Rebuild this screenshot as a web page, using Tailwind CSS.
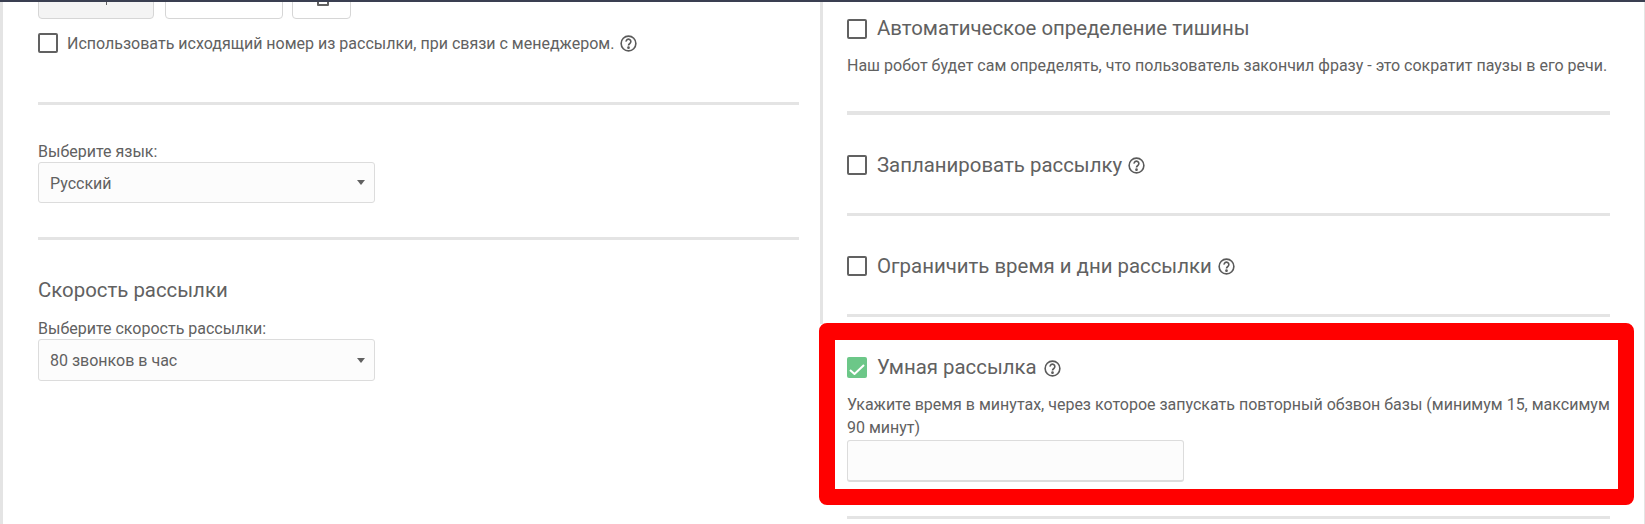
<!DOCTYPE html>
<html lang="ru">
<head>
<meta charset="UTF-8">
<title>Рассылка</title>
<script src="https://cdn.jsdelivr.net/npm/@tailwindcss/browser@4"></script>
</head>
<body class="bg-white text-[#616161] font-['Roboto',sans-serif] text-[16px] h-[524px] overflow-hidden">
<div class="relative h-[524px] overflow-hidden border-t-2 border-[#3a3f51] flex">

  <!-- левая колонка -->
  <div class="w-[820px] shrink-0 border-l-[3px] border-[#e4e4e4] pl-[35px] pr-[21px]">
    <div class="flex h-[17px] items-end">
      <div class="w-[116px] h-[30px] bg-[#f4f4f4] border border-[#d6d6d6] rounded-[4px] flex items-end pl-[67px] pb-[13px]">
        <span class="w-[1px] h-[4px] bg-[#616161]"></span>
      </div>
      <div class="ml-[11px] w-[118px] h-[30px] bg-white border border-[#d6d6d6] rounded-[4px]"></div>
      <div class="ml-[9px] w-[59px] h-[30px] bg-white border border-[#d6d6d6] rounded-[4px] flex items-end pl-[24px] pb-[12px]">
        <span class="w-[12px] h-[10px] border-2 border-[#616161] rounded-[1px]"></span>
      </div>
    </div>
    <label class="flex items-center mt-[14px] h-[20px]">
      <span class="w-[20px] h-[20px] border-2 border-[#616161] rounded-[2px] mr-[9px] shrink-0"></span>
      <span class="mt-[2px]">Использовать исходящий номер из рассылки, при связи с менеджером.</span>
      <svg class="ml-[6px] w-[17px] h-[17px]" viewBox="0 0 18 18" fill="none" stroke="#5a5a5a" stroke-width="1.7"><circle cx="9" cy="9" r="7.8"/><path d="M6.5 7a2.5 2.5 0 1 1 3.9 2c-.9.6-1.4 1-1.4 2"/><circle cx="9" cy="13.4" r=".6" fill="#5a5a5a"/></svg>
    </label>
    <hr class="mt-[49px] h-[3px] bg-[#e4e4e4] border-0">

    <p class="mt-[36px] h-[20px] leading-[22px]">Выберите язык:</p>
    <div class="mt-[1px] w-[337px] h-[41px] bg-[#fcfcfc] border border-[#dcdcdc] rounded-[3px] flex items-center justify-between pl-[11px] pr-[9px]">
      <span class="mt-[2px]">Русский</span>
      <span class="border-x-[4.5px] border-x-transparent border-t-[5px] border-t-[#616161]"></span>
    </div>
    <hr class="mt-[34px] h-[3px] bg-[#e4e4e4] border-0">

    <h3 class="mt-[37px] h-[24px] leading-[26px] text-[20.4px]">Скорость рассылки</h3>
    <p class="mt-[17px] h-[20px] leading-[22px]">Выберите скорость рассылки:</p>
    <div class="mt-[1px] w-[337px] h-[42px] bg-[#fcfcfc] border border-[#dcdcdc] rounded-[3px] flex items-center justify-between pl-[11px] pr-[9px]">
      <span class="mt-[2px]">80 звонков в час</span>
      <span class="border-x-[4.5px] border-x-transparent border-t-[5px] border-t-[#616161]"></span>
    </div>
  </div>

  <!-- правая колонка -->
  <div class="flex-1 border-r border-[#e4e4e4]">
    <div class="h-[322px] border-l-[3px] border-[#e4e4e4] pl-[24px] pr-[34px] pt-[17px]">
      <label class="flex items-center h-[20px] text-[20.4px] leading-[18px]">
        <span class="w-[20px] h-[20px] border-2 border-[#616161] rounded-[2px] mr-[10px] shrink-0"></span>
        <span class="mb-[2px]">Автоматическое определение тишины</span>
      </label>
      <p class="mt-[17px] h-[20px] leading-[20px] whitespace-nowrap">Наш робот будет сам определять, что пользователь закончил фразу - это сократит паузы в его речи.</p>
      <hr class="mt-[35px] h-[4px] bg-[#e4e4e4] border-0">

      <label class="flex items-center mt-[40px] h-[20px] text-[20.4px] leading-[18px]">
        <span class="w-[20px] h-[20px] border-2 border-[#616161] rounded-[2px] mr-[10px] shrink-0"></span>
        Запланировать рассылку
        <svg class="ml-[6px] w-[17px] h-[17px]" viewBox="0 0 18 18" fill="none" stroke="#5a5a5a" stroke-width="1.7"><circle cx="9" cy="9" r="7.8"/><path d="M6.5 7a2.5 2.5 0 1 1 3.9 2c-.9.6-1.4 1-1.4 2"/><circle cx="9" cy="13.4" r=".6" fill="#5a5a5a"/></svg>
      </label>
      <hr class="mt-[38px] h-[3px] bg-[#e4e4e4] border-0">

      <label class="flex items-center mt-[40px] h-[20px] text-[20.4px] leading-[18px]">
        <span class="w-[20px] h-[20px] border-2 border-[#616161] rounded-[2px] mr-[10px] shrink-0"></span>
        Ограничить время и дни рассылки
        <svg class="ml-[6px] w-[17px] h-[17px]" viewBox="0 0 18 18" fill="none" stroke="#5a5a5a" stroke-width="1.7"><circle cx="9" cy="9" r="7.8"/><path d="M6.5 7a2.5 2.5 0 1 1 3.9 2c-.9.6-1.4 1-1.4 2"/><circle cx="9" cy="13.4" r=".6" fill="#5a5a5a"/></svg>
      </label>
      <hr class="mt-[38px] h-[3px] bg-[#e4e4e4] border-0">
    </div>

    <div class="pl-[27px] pr-[34px] pt-[33px]">
      <label class="flex items-center h-[21px] text-[20.4px] leading-[18px]">
        <span class="w-[20px] h-[21px] bg-[#6cc788] rounded-[2px] mr-[10px] shrink-0 flex items-end justify-center pb-[3px]">
          <svg class="w-[16px] h-[11px]" viewBox="0 0 16 11" fill="none" stroke="#fff" stroke-width="2"><path d="M1 6l4.5 4L15 1"/></svg>
        </span>
        <span class="mb-[2px]">Умная рассылка</span>
        <svg class="ml-[7px] mt-[2px] w-[17px] h-[17px]" viewBox="0 0 18 18" fill="none" stroke="#5a5a5a" stroke-width="1.7"><circle cx="9" cy="9" r="7.8"/><path d="M6.5 7a2.5 2.5 0 1 1 3.9 2c-.9.6-1.4 1-1.4 2"/><circle cx="9" cy="13.4" r=".6" fill="#5a5a5a"/></svg>
      </label>
      <p class="mt-[15px] leading-[23px]">Укажите время в минутах, через которое запускать повторный обзвон базы (минимум 15, максимум 90 минут)</p>
      <div class="mt-[1px] w-[337px] h-[42px] bg-[#fcfcfc] border border-[#dcdcdc] border-b-2 rounded-[3px]"></div>
      <hr class="mt-[34px] h-[3px] bg-[#e4e4e4] border-0">
    </div>
  </div>

  <!-- красная рамка поверх страницы -->
  <div class="absolute left-[819px] top-[321px] w-[815px] h-[182px] border-[16px] border-t-[17px] border-[#ff0000] rounded-[8px]"></div>
</div>
</body>
</html>
